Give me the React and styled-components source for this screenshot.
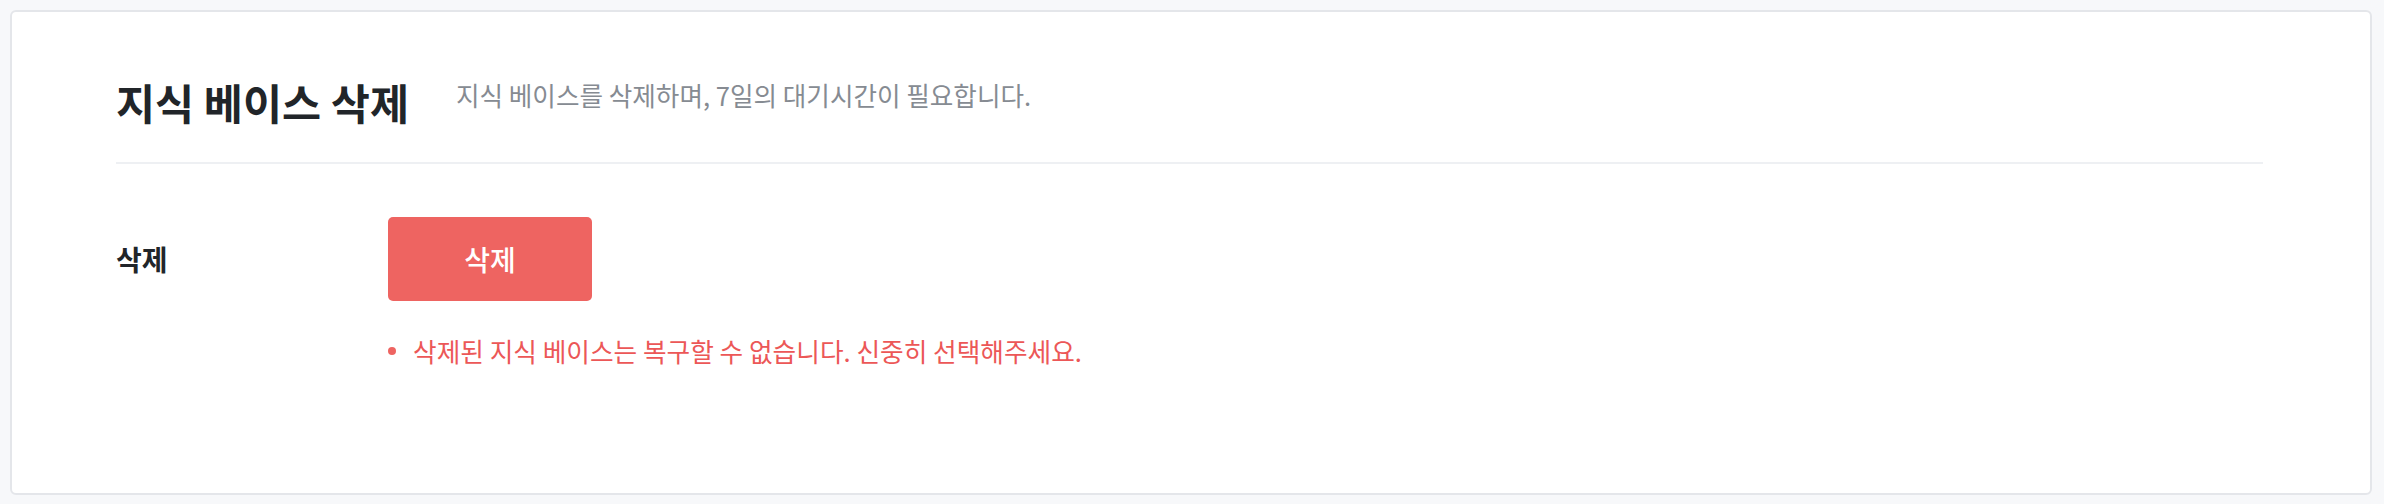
import React from "react";
import styled, { createGlobalStyle } from "styled-components";

const GlobalStyle = createGlobalStyle`
  html, body {
    margin: 0;
    padding: 0;
    background: #f7f8fa;
  }
  body {
    font-family: "Noto Sans CJK KR", "Noto Sans", sans-serif;
    -webkit-font-smoothing: antialiased;
  }
  * { box-sizing: border-box; }
`;

const Page = styled.div`
  padding: 10px 12px 9px 10px;
`;

const Card = styled.section`
  background: #ffffff;
  border: 2px solid #e4e6ea;
  border-radius: 6px;
  padding: 57px 107px 124px 104px;
`;

const Header = styled.header`
  display: flex;
  align-items: flex-start;
  gap: 47px;
  padding-bottom: 27px;
  border-bottom: 2px solid #eef0f3;
`;

const Title = styled.h1`
  margin: 0;
  font-size: 42.5px;
  line-height: 66px;
  font-weight: 700;
  color: #212529;
`;

const Subtitle = styled.p`
  margin: 8px 0 0;
  font-size: 25.6px;
  line-height: 36px;
  font-weight: 400;
  color: #868b92;
`;

const Row = styled.div`
  display: flex;
  align-items: center;
  margin-top: 53px;
`;

const Label = styled.div`
  width: 272px;
  flex: none;
  font-size: 28px;
  line-height: 40px;
  font-weight: 700;
  color: #212529;
`;

const DangerButton = styled.button`
  width: 204px;
  height: 84px;
  border: none;
  border-radius: 5px;
  background: #ee6461;
  color: #ffffff;
  font-family: inherit;
  font-size: 28px;
  font-weight: 500;
  cursor: pointer;
`;

const Notes = styled.ul`
  list-style: none;
  margin: 32px 0 0 272px;
  padding: 0;
`;

const Note = styled.li`
  display: flex;
  align-items: center;
  gap: 17px;
  font-size: 25.7px;
  line-height: 36px;
  color: #ec5757;

  &::before {
    content: "";
    width: 8px;
    height: 8px;
    border-radius: 50%;
    background: #ee6461;
    flex: none;
  }
`;

export default function App() {
  return (
    <Page>
      <GlobalStyle />
      <Card>
        <Header>
          <Title>지식 베이스 삭제</Title>
          <Subtitle>지식 베이스를 삭제하며, 7일의 대기시간이 필요합니다.</Subtitle>
        </Header>
        <Row>
          <Label>삭제</Label>
          <DangerButton type="button">삭제</DangerButton>
        </Row>
        <Notes>
          <Note>삭제된 지식 베이스는 복구할 수 없습니다. 신중히 선택해주세요.</Note>
        </Notes>
      </Card>
    </Page>
  );
}
